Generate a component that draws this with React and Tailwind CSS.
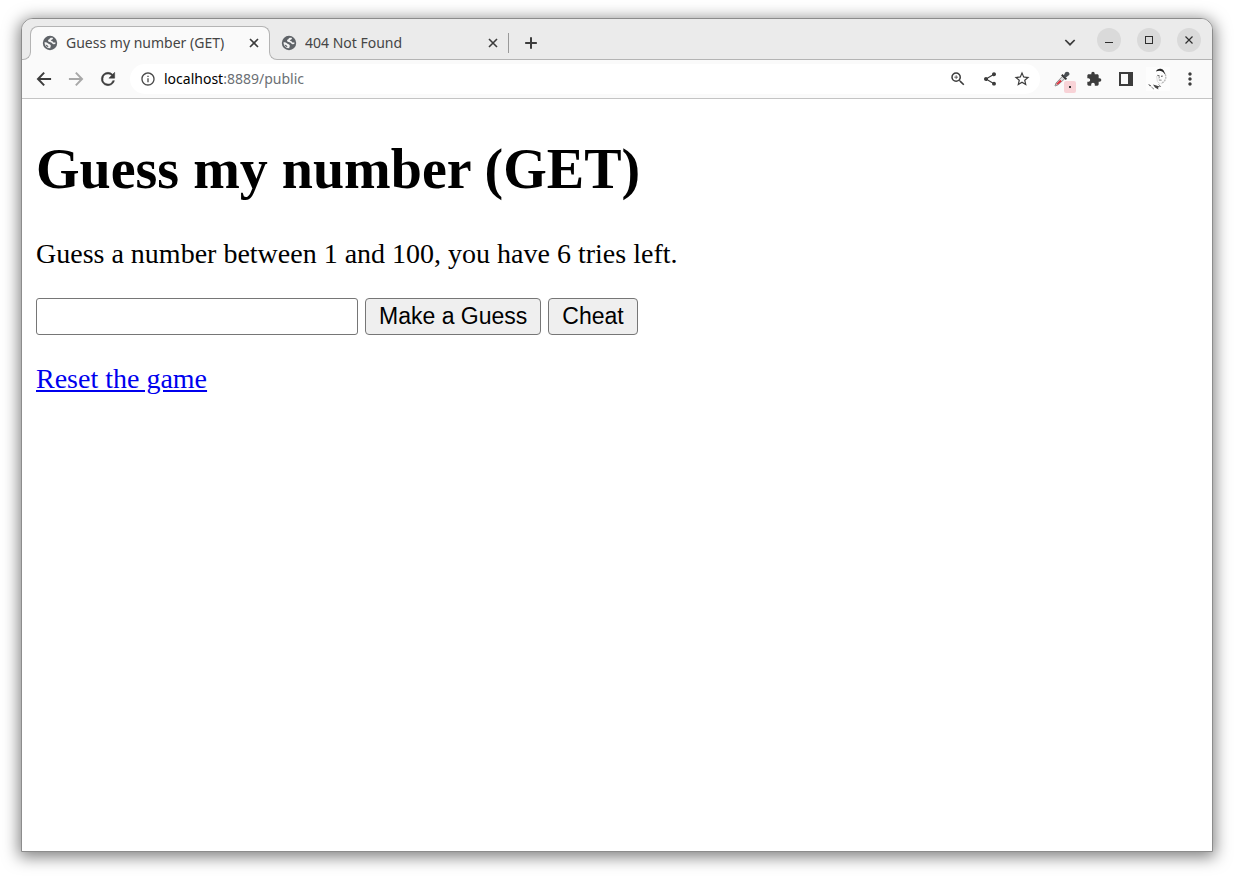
import { MdInfoOutline, MdZoomIn, MdShare, MdStarBorder, MdExtension, MdMoreVert } from "react-icons/md";

function GlobeIcon() {
  return (
    <svg viewBox="0 0 16 16" className="size-4 shrink-0" aria-hidden="true">
      <circle cx="8" cy="8" r="7.2" fill="#5f6368" />
      <path
        d="M10.6 2.8 C8.8 2.4 7.4 3.2 7.4 4.3 C6.2 4.4 5.8 5.4 6.2 6.3 C6.8 7.4 8.2 7 9.2 7.4 C10.4 7.9 10.4 9.2 11.6 9.2 L13.3 9 L13.5 7.4 L12 7.6 C11 7.4 11 6.2 9.8 5.9 L8.8 5.6 C8.8 4.6 10.6 4.8 11 3.8Z"
        fill="#f4f4f4"
      />
      <path
        d="M2.5 7.3 C2.4 9.8 3.8 12 6 13 L8.4 13.3 C8 12.4 9 11.8 8.8 10.6 C8.5 9.3 7 9.4 6.2 8.6 C5.2 7.6 4 7.2 2.5 7.3Z"
        fill="#f4f4f4"
      />
      <path d="M3.6 9.4 L5.4 10.2 L6.4 11.4 L6.2 12.2 C4.8 11.8 3.8 10.6 3.6 9.4Z" fill="#5f6368" />
    </svg>
  );
}

function LineIcon({ d, width = 2.4, className = "size-5" }) {
  return (
    <svg viewBox="0 0 24 24" className={className} fill="none" stroke="currentColor" strokeWidth={width} aria-hidden="true">
      <path d={d} />
    </svg>
  );
}

function ReloadIcon() {
  return (
    <svg viewBox="0 0 24 24" className="size-5" fill="currentColor" stroke="currentColor" strokeWidth="0.6" aria-hidden="true">
      <path d="M17.65 6.35A7.95 7.95 0 0 0 12 4a8 8 0 1 0 7.73 10h-2.08A6 6 0 1 1 12 6c1.66 0 3.14.69 4.22 1.78L13 11h7V4z" />
    </svg>
  );
}

function EyedropperIcon() {
  return (
    <svg viewBox="0 0 16 16" className="size-4" aria-hidden="true">
      <path d="M8.6 5.2 L11 7.4 L4.2 13.8 L1 15 L2 12Z" fill="#d9dcde" stroke="#909090" strokeWidth="1" />
      <path d="M6.2 8.8 L7.8 10.2 L3.8 13.6 L2.4 13.6 L2.8 12.2Z" fill="#e0303c" />
      <path d="M7.8 3.8 L12.4 8.4" stroke="#333" strokeWidth="2" />
      <path d="M9.4 5.2 L11.2 1.6 C12.6 0 16.4 1 15.2 4 L11.6 6.8Z" fill="#4a4f53" />
    </svg>
  );
}

function Portrait() {
  return (
    <svg viewBox="0 0 24 24" className="size-6" aria-hidden="true">
      <rect width="24" height="24" fill="#fdfdfd" />
      <path d="M10 4.6 C11 1.4 15.4 1 17.6 3.4 L19.6 7.4 L18.2 6.6 C16.4 3.4 13 3 10 4.6Z" fill="#222" />
      <path d="M19.2 7 C20.4 10 19.8 12.6 17.8 14.8 L15 16.6" stroke="#bbb" strokeWidth="1.4" strokeDasharray="2 0.8" fill="none" />
      <path d="M11.4 8.4 L13.6 9 M15 9.4 L16.8 9" stroke="#666" strokeWidth="1.2" />
      <path d="M13.4 9.6 L13 11.4 M12.8 13 L15.6 13.2" stroke="#888" />
      <path d="M10.6 9 L11.4 14.6 L14 16.8" stroke="#ddd" fill="none" />
      <path d="M2 17 L5 18.2 L4.2 19.4Z M7 17.6 L10.4 18.4 L14.4 19.8 L12 20.4 L12.4 22.4 L9 20.6Z" fill="#444" />
      <path d="M5.4 20 L8 22.2 M12.6 17.4 L15 20" stroke="#888" />
    </svg>
  );
}

function IconButton({ label, className = "text-[#3c3c3c]", children }) {
  return (
    <button
      type="button"
      aria-label={label}
      className={`flex size-8 shrink-0 items-center justify-center ${className}`}
    >
      {children}
    </button>
  );
}

function WindowButton({ label, children }) {
  return (
    <button
      type="button"
      aria-label={label}
      className="flex size-6 items-center justify-center rounded-full bg-[#dadada] text-[#2e2e2e]"
    >
      <svg viewBox="0 0 16 16" className="size-4" fill="none" stroke="currentColor" aria-hidden="true">
        {children}
      </svg>
    </button>
  );
}

function TabContent({ title }) {
  return (
    <>
      <GlobeIcon />
      <span className="flex-1 truncate">{title}</span>
      <button type="button" aria-label={`Close ${title}`} className="text-[#3c3c3c]">
        <LineIcon className="size-4" d="M6 6 L18 18 M18 6 L6 18" />
      </button>
    </>
  );
}

function TabStrip() {
  return (
    <div className="flex h-[41px] bg-[#ebebeb] font-['Noto_Sans',sans-serif] text-sm text-[#454545]">
      <div className="relative z-10 -mr-px w-[9px] self-end bg-[#fafafa]">
        <div className="h-2 rounded-br-lg border-r border-b border-[#b4b4b4] bg-[#ebebeb]" />
      </div>
      <div className="mt-[7px] flex w-60 items-center gap-2 rounded-t-lg border-x border-t border-[#b4b4b4] bg-[#fafafa] pr-[7px] pb-0.5 pl-[11px]">
        <TabContent title="Guess my number (GET)" />
      </div>
      <div className="relative z-10 -ml-px w-[9px] self-end bg-[#fafafa]">
        <div className="h-2 rounded-bl-lg border-b border-l border-[#b4b4b4] bg-[#ebebeb]" />
      </div>
      <div className="flex flex-1 items-center border-b border-[#b4b4b4]">
        <div className="mt-2 flex w-[231px] items-center gap-2 border-r border-[#999] pr-[7px] pl-[3px]">
          <TabContent title="404 Not Found" />
        </div>
        <IconButton label="New tab" className="mt-2 ml-1.5 text-[#3c3c3c]">
          <LineIcon d="M12 5 V19 M5 12 H19" />
        </IconButton>
        <div className="mt-0.5 ml-auto flex items-center gap-4 pr-[11px]">
          <button type="button" aria-label="Search tabs" className="mt-1 mr-[3px] text-[#3c3c3c]">
            <LineIcon className="size-4" d="M5 9 L12 16 L19 9" width={2.6} />
          </button>
          <WindowButton label="Minimize">
            <path d="M4 10.5 H12" />
          </WindowButton>
          <WindowButton label="Maximize">
            <rect x="4.5" y="4.5" width="7" height="7" />
          </WindowButton>
          <WindowButton label="Close window">
            <path d="M4.5 4.5 L11.5 11.5 M11.5 4.5 L4.5 11.5" strokeWidth="1.2" />
          </WindowButton>
        </div>
      </div>
    </div>
  );
}

function Toolbar() {
  return (
    <div className="flex h-[39px] items-center border-b border-[#c4c4c4] bg-[#fafafa] px-1.5">
      <IconButton label="Back">
        <LineIcon d="M20.5 12 H5 M12.2 4.4 L4.8 12 L12.2 19.6" />
      </IconButton>
      <IconButton label="Forward" className="text-[#a8a8a8]">
        <LineIcon d="M3.5 12 H19 M11.8 4.4 L19.2 12 L11.8 19.6" />
      </IconButton>
      <IconButton label="Reload">
        <ReloadIcon />
      </IconButton>
      <div className="ml-1.5 flex h-[30px] flex-1 items-center rounded-full bg-white pl-2.5">
        <MdInfoOutline className="size-4 text-[#4a4a4a]" />
        <span className="ml-2 flex-1 font-['Noto_Sans',sans-serif] text-sm text-[#6b6f74]">
          <span className="text-black">localhost</span>:8889/public
        </span>
        <IconButton label="Zoom"><MdZoomIn className="size-[18px]" /></IconButton>
        <IconButton label="Share"><MdShare className="size-4" /></IconButton>
        <IconButton label="Bookmark this page" className="mr-0.5 text-[#3c3c3c]"><MdStarBorder className="size-[18px]" /></IconButton>
      </div>
      <div className="ml-1.5 flex">
        <IconButton label="Color picker" className="relative">
          <EyedropperIcon />
          <span className="absolute right-0.5 bottom-0.5 flex size-3 items-center justify-center rounded-xs bg-[#f8d3d7]">
            <span className="size-0.5 bg-[#333]" />
          </span>
        </IconButton>
        <IconButton label="Extensions"><MdExtension className="size-4" /></IconButton>
        <IconButton label="Side panel">
          <svg viewBox="0 0 16 16" className="size-4" aria-hidden="true">
            <path d="M1 1 H15 V15 H1Z M3 3 V13 H10 V3Z" fill="currentColor" fillRule="evenodd" />
          </svg>
        </IconButton>
        <IconButton label="Profile"><Portrait /></IconButton>
        <IconButton label="Menu"><MdMoreVert className="size-5" /></IconButton>
      </div>
    </div>
  );
}

export default function App() {
  return (
    <div className="flex min-h-screen flex-col bg-white px-[21px] pt-[18px] pb-6">
      <div className="flex flex-1 flex-col overflow-hidden rounded-t-xl border border-[#8c8c8c] bg-white shadow-[0_3px_16px_2px_rgba(0,0,0,0.5)]">
        <TabStrip />
        <Toolbar />
        <main className="px-3.5 font-['Liberation_Serif',serif] text-[28px] leading-8 text-black">
          <h1 className="mt-[38px] text-[56px] leading-16 font-bold">Guess my number (GET)</h1>
          <p className="mt-[37px]">Guess a number between 1 and 100, you have 6 tries left.</p>
          <form className="mt-7 flex gap-[7px] font-['Liberation_Sans',sans-serif] text-[23px] leading-7" onSubmit={(e) => e.preventDefault()}>
            <input
              type="text"
              aria-label="Your guess"
              className="h-[37px] w-[322px] rounded-[3px] border border-[#767676] bg-white px-1"
            />
            <button type="submit" className="h-[37px] rounded-[4px] border border-[#767676] bg-[#efefef] px-[13px] pb-0.5">
              Make a Guess
            </button>
            <button type="button" className="h-[37px] rounded-[4px] border border-[#767676] bg-[#efefef] px-[13px] pb-0.5">
              Cheat
            </button>
          </form>
          <p className="mt-7">
            <a href="#reset" className="text-[#0000ee] underline">Reset the game</a>
          </p>
        </main>
      </div>
    </div>
  );
}
